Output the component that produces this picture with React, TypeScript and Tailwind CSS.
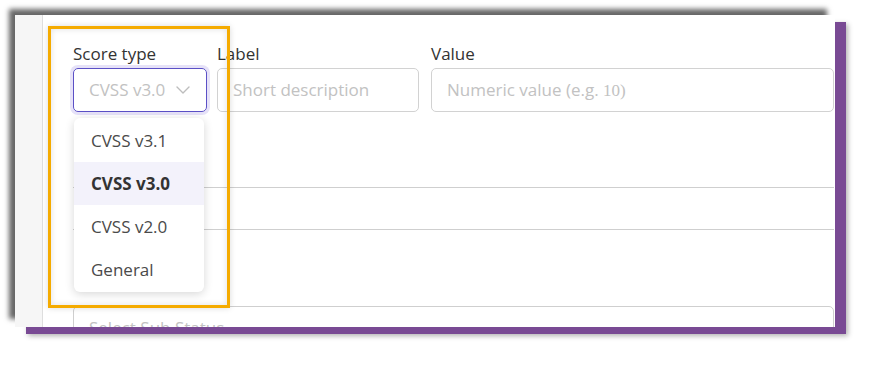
import React from "react";

const font = { fontFamily: "'Open Sans', 'Noto Sans', sans-serif" };

const options = ["CVSS v3.1", "CVSS v3.0", "CVSS v2.0", "General"];

const Chevron = () => (
  <svg width="14" height="8" viewBox="0 0 14 8" fill="none">
    <polyline points="1,1 7,7 13,1" stroke="#bdbdbd" strokeWidth="1.4" strokeLinecap="round" strokeLinejoin="round" />
  </svg>
);

const App = () => {
  return (
    <div className="w-[877px] h-[369px] bg-white overflow-hidden pt-[15px] pl-[15px]" style={font}>
      <div className="relative w-[820px] h-[312px] bg-white flex shadow-[-7px_-7px_5px_-1px_rgba(0,0,0,0.6),11px_7px_0_0_#794a94,13px_9px_5px_0_rgba(0,0,0,0.3)]">
        <div className="relative flex w-full h-full overflow-hidden">
          {/* left rail */}
          <div className="w-[28px] h-full bg-[#f6f6f6] border-r border-[#dedede] shrink-0"></div>

          <div className="relative flex-1 pl-[30px] pr-[1px] pt-[27px]">
            {/* first row */}
            <div className="flex items-start">
              <div className="w-[134px] shrink-0">
                <div className="text-[17px] leading-[24px] text-[#333] mb-[2px]">Score type</div>
                <div className="h-[44px] rounded-[5px] border-[1.5px] border-[#5b50c6] shadow-[0_0_0_3px_#e6e2f8] flex items-center justify-between pl-[15px] pr-[16px]">
                  <span className="text-[17px] text-[#c2c2c2]">CVSS v3.0</span>
                  <Chevron />
                </div>
              </div>
              <div className="w-[202px] shrink-0 ml-[10px]">
                <div className="text-[17px] leading-[24px] text-[#333] mb-[2px]">Label</div>
                <div className="h-[44px] rounded-[5px] border border-[#d2d2d2] flex items-center pl-[15px]">
                  <span className="text-[17px] text-[#c2c2c2]">Short description</span>
                </div>
              </div>
              <div className="flex-1 ml-[12px]">
                <div className="text-[17px] leading-[24px] text-[#333] mb-[2px]">Value</div>
                <div className="h-[44px] rounded-[5px] border border-[#d2d2d2] flex items-center pl-[15px]">
                  <span className="text-[17px] text-[#c2c2c2]">
                    Numeric value (e.g.
                    <span style={{ fontFamily: "'Liberation Serif', serif" }}> 10)</span>
                  </span>
                </div>
              </div>
            </div>

            {/* rows hidden behind the menu */}
            <div className="mt-[75px] border-t border-[#cfcfcf]"></div>
            <div className="mt-[41px] border-t border-[#cfcfcf]"></div>
            <div className="mt-[76px] h-[44px] rounded-[5px] border border-[#cfcfcf] flex items-center pl-[15px]">
              <span className="text-[17px] text-[#c2c2c2]">Select Sub Status</span>
            </div>

            {/* open dropdown */}
            <div className="absolute left-[31px] top-[103px] w-[130px] bg-white rounded-[6px] py-[1px] shadow-[0_2px_10px_rgba(0,0,0,0.16)] z-10">
              {options.map((o) => (
                <div
                  key={o}
                  className={`h-[43px] flex items-center pl-[17px] text-[17px] ${
                    o === "CVSS v3.0" ? "bg-[#f3f2fb] font-bold text-[#333]" : "text-[#4a4a4a]"
                  }`}
                >
                  {o}
                </div>
              ))}
            </div>
          </div>

          {/* highlight annotation */}
          <div className="absolute left-[33px] top-[11px] w-[182px] h-[282px] border-[3px] border-[#f5ab00] z-20 shadow-[0_0_6px_rgba(0,0,0,0.15),inset_0_0_6px_rgba(0,0,0,0.12)]"></div>
        </div>
      </div>
    </div>
  );
};

export default App;
